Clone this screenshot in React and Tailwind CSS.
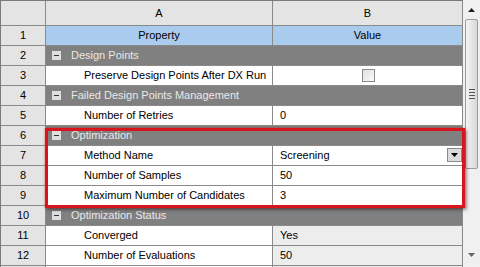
import React from "react";

const rows = [
  { n: 1, kind: "head" },
  { n: 2, kind: "cat", label: "Design Points" },
  { n: 3, kind: "prop", label: "Preserve Design Points After DX Run", check: true },
  { n: 4, kind: "cat", label: "Failed Design Points Management" },
  { n: 5, kind: "prop", label: "Number of Retries", value: "0" },
  { n: 6, kind: "cat", label: "Optimization" },
  { n: 7, kind: "prop", label: "Method Name", value: "Screening", combo: true },
  { n: 8, kind: "prop", label: "Number of Samples", value: "50" },
  { n: 9, kind: "prop", label: "Maximum Number of Candidates", value: "3" },
  { n: 10, kind: "cat", label: "Optimization Status" },
  { n: 11, kind: "prop", label: "Converged", value: "Yes", ro: true },
  { n: 12, kind: "prop", label: "Number of Evaluations", value: "50", ro: true },
  { n: "", kind: "prop", label: "", value: "", ro: true },
];

function Minus() {
  return (
    <span className="w-[9px] h-[9px] bg-[#dedede] flex items-center justify-center shrink-0">
      <span className="w-[5px] h-px bg-[#333]" />
    </span>
  );
}

function Row({ r }) {
  const num = (
    <div className="bg-[#e4e4e4] h-[19px] flex items-center justify-center text-black">{r.n}</div>
  );
  if (r.kind === "head") {
    return (
      <>
        {num}
        <div className="bg-[#a9cbee] flex items-center justify-center text-black">Property</div>
        <div className="bg-[#a9cbee] flex items-center justify-center text-black">Value</div>
      </>
    );
  }
  if (r.kind === "cat") {
    return (
      <>
        {num}
        <div className="col-span-2 bg-[#808080] flex items-center gap-[10px] pl-[6px] text-[#e8e8e8]">
          <Minus />
          <span>{r.label}</span>
        </div>
      </>
    );
  }
  return (
    <>
      {num}
      <div className="bg-white flex items-center pl-[38px] text-black">{r.label}</div>
      <div className={`${r.ro ? "bg-[#ededed]" : "bg-white"} flex items-center pl-[7px] text-black relative`}>
        {r.check ? (
          <span className="mx-auto -translate-x-[3px] w-[13px] h-[13px] border border-[#8a8a8a] bg-gradient-to-br from-[#e0e0e0] to-[#fafafa]" />
        ) : (
          <span>{r.value}</span>
        )}
        {r.combo && (
          <span className="absolute right-0 top-[2px] w-[15px] h-[14px] bg-[#dcdcdc] border border-[#8a8a8a] flex items-center justify-center">
            <svg width="7" height="4" viewBox="0 0 7 4"><path d="M0 0h7L3.5 4z" fill="#000" /></svg>
          </span>
        )}
      </div>
    </>
  );
}

export default function App() {
  return (
    <div className="w-[480px] h-[267px] overflow-hidden flex bg-white text-[11px] leading-none" style={{ fontFamily: '"Liberation Sans", Arial, sans-serif' }}>
      <div className="relative w-[463px] shrink-0">
        <div className="grid grid-cols-[44px_226px_189px] gap-px bg-[#8a8a8a] border-l border-t border-[#7a7a7a]">
          <div className="bg-[#e4e4e4] h-[24px]" />
          <div className="bg-[#e4e4e4] flex items-center justify-center text-black">A</div>
          <div className="bg-[#e4e4e4] flex items-center justify-center text-black">B</div>
          {rows.map((r, i) => <Row key={i} r={r} />)}
        </div>
        <div className="absolute left-[45px] top-[128px] w-[420px] h-[80px] border-[3px] border-[#d8141c] shadow-[2px_2px_3px_rgba(0,0,0,0.35),0_0_2px_rgba(220,0,0,0.5)] z-10" />
      </div>
      <div className="w-[17px] h-full bg-[#f0f0f0] flex flex-col items-center">
        <div className="h-[19px] flex items-center justify-center pt-[1px]">
          <svg width="7" height="4" viewBox="0 0 7 4"><path d="M0 4h7L3.5 0z" fill="#222" /></svg>
        </div>
        <div className="w-[13px] h-[150px] rounded-[2px] border border-[#9c9c9c] bg-gradient-to-r from-[#f4f4f4] to-[#d8d8d8] flex flex-col items-center justify-center gap-[2px]">
          <span className="w-[6px] h-px bg-[#555]" />
          <span className="w-[6px] h-px bg-[#555]" />
          <span className="w-[6px] h-px bg-[#555]" />
          <span className="w-[6px] h-px bg-[#555]" />
        </div>
        <div className="flex-1" />
        <div className="h-[19px] flex items-center justify-center pb-[6px]">
          <svg width="7" height="4" viewBox="0 0 7 4"><path d="M0 0h7L3.5 4z" fill="#666" /></svg>
        </div>
      </div>
    </div>
  );
}
